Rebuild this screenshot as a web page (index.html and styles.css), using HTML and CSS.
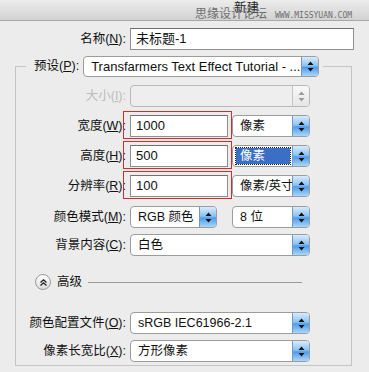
FILE: index.html
```html
<!DOCTYPE html>
<html lang="zh-CN">
<head>
  <meta charset="UTF-8" />
  <title>新建</title>
  <link rel="stylesheet" href="styles.css">
</head>
<body>
  <div class="dialog">
    <!-- Title bar -->
    <div class="titlebar">
      <span class="title">新建</span>
      <span class="watermark">思缘设计论坛</span>
      <span class="watermark-url">WWW.MISSYUAN.COM</span>
    </div>

    <div class="content">
      <!-- Name -->
      <div class="row name-row">
        <span class="label">名称(<u>N</u>):</span>
        <div class="field w-name">未标题-1</div>
      </div>

      <!-- Preset group -->
      <fieldset class="group">
        <legend>
          <span class="legend-inner">
            <span class="label">预设(<u>P</u>):</span>
            <span class="select w-preset">
              <span class="value">Transfarmers Text Effect Tutorial - ...</span>
              <span class="arrow"><svg width="7" height="11" viewBox="0 0 7 11"><path d="M3.5 0.5L6.5 4H0.5Z M3.5 10.5L6.5 7H0.5Z" fill="#111"/></svg></span>
            </span>
          </span>
        </legend>

        <div class="row size-row">
          <span class="label disabled">大小(<u>I</u>):</span>
          <span class="select disabled w-full">
            <span class="value"></span>
            <span class="arrow"><svg width="7" height="11" viewBox="0 0 7 11"><path d="M3.5 0.5L6.5 4H0.5Z M3.5 10.5L6.5 7H0.5Z" fill="#9a9a9a"/></svg></span>
          </span>
        </div>

        <div class="row">
          <span class="label">宽度(<u>W</u>):</span>
          <div class="field w-num marked">1000</div>
          <span class="select w-unit">
            <span class="value">像素</span>
            <span class="arrow"><svg width="7" height="11" viewBox="0 0 7 11"><path d="M3.5 0.5L6.5 4H0.5Z M3.5 10.5L6.5 7H0.5Z" fill="#111"/></svg></span>
          </span>
        </div>

        <div class="row">
          <span class="label">高度(<u>H</u>):</span>
          <div class="field w-num marked">500</div>
          <span class="select w-unit focused">
            <span class="value"><span class="hl">像素</span></span>
            <span class="arrow"><svg width="7" height="11" viewBox="0 0 7 11"><path d="M3.5 0.5L6.5 4H0.5Z M3.5 10.5L6.5 7H0.5Z" fill="#111"/></svg></span>
          </span>
        </div>

        <div class="row">
          <span class="label">分辨率(<u>R</u>):</span>
          <div class="field w-num marked">100</div>
          <span class="select w-unit">
            <span class="value">像素/英寸</span>
            <span class="arrow"><svg width="7" height="11" viewBox="0 0 7 11"><path d="M3.5 0.5L6.5 4H0.5Z M3.5 10.5L6.5 7H0.5Z" fill="#111"/></svg></span>
          </span>
        </div>

        <div class="row mode-row">
          <span class="label">颜色模式(<u>M</u>):</span>
          <span class="select w-mode">
            <span class="value">RGB 颜色</span>
            <span class="arrow"><svg width="7" height="11" viewBox="0 0 7 11"><path d="M3.5 0.5L6.5 4H0.5Z M3.5 10.5L6.5 7H0.5Z" fill="#111"/></svg></span>
          </span>
          <span class="select w-bits">
            <span class="value">8 位</span>
            <span class="arrow"><svg width="7" height="11" viewBox="0 0 7 11"><path d="M3.5 0.5L6.5 4H0.5Z M3.5 10.5L6.5 7H0.5Z" fill="#111"/></svg></span>
          </span>
        </div>

        <div class="row bg-row">
          <span class="label">背景内容(<u>C</u>):</span>
          <span class="select w-full">
            <span class="value">白色</span>
            <span class="arrow"><svg width="7" height="11" viewBox="0 0 7 11"><path d="M3.5 0.5L6.5 4H0.5Z M3.5 10.5L6.5 7H0.5Z" fill="#111"/></svg></span>
          </span>
        </div>

        <!-- Advanced -->
        <div class="advanced">
          <span class="toggle"><svg width="9" height="9" viewBox="0 0 9 9"><path d="M1.5 4.5L4.5 1.8L7.5 4.5 M1.5 7.5L4.5 4.8L7.5 7.5" fill="none" stroke="#222" stroke-width="1.3"/></svg></span>
          <span class="adv-text">高级</span>
          <span class="adv-line"></span>
        </div>

        <div class="row profile-row">
          <span class="label">颜色配置文件(<u>O</u>):</span>
          <span class="select w-full">
            <span class="value">sRGB IEC61966-2.1</span>
            <span class="arrow"><svg width="7" height="11" viewBox="0 0 7 11"><path d="M3.5 0.5L6.5 4H0.5Z M3.5 10.5L6.5 7H0.5Z" fill="#111"/></svg></span>
          </span>
        </div>

        <div class="row aspect-row">
          <span class="label">像素长宽比(<u>X</u>):</span>
          <span class="select w-full">
            <span class="value">方形像素</span>
            <span class="arrow"><svg width="7" height="11" viewBox="0 0 7 11"><path d="M3.5 0.5L6.5 4H0.5Z M3.5 10.5L6.5 7H0.5Z" fill="#111"/></svg></span>
          </span>
        </div>
      </fieldset>
    </div>
  </div>
</body>
</html>
```

FILE: styles.css
```css
:root {
  --bg: #ececec;
  --border: #9c9c9c;
  --group-line: #c4c4c4;
  --text: #111;
  --mark: #d22c2c;
  --font: "Liberation Sans", "Noto Sans CJK SC", sans-serif;
}

body {
  margin: 0;
  background: var(--bg);
  font-family: var(--font);
  font-size: 12.5px;
  color: var(--text);
}

/* Title bar */
.titlebar {
  position: relative;
  height: 20px;
  background: linear-gradient(#ececec, #d2d2d2);
  border-bottom: 1px solid #a8a8a8;
}
.titlebar .title {
  position: absolute;
  left: 234px;
  top: 2px;
  font-size: 12.5px;
  line-height: 13px;
  color: #222;
}
.watermark {
  position: absolute;
  left: 195px;
  top: 8px;
  font-size: 12px;
  line-height: 13px;
  color: #6e6e6e;
  white-space: nowrap;
}
.watermark-url {
  position: absolute;
  left: 275px;
  top: 11px;
  font-family: "DejaVu Sans Mono", monospace;
  font-size: 8px;
  line-height: 9px;
  color: #6e6e6e;
}

.content {
  padding-top: 7px;
}

/* Rows */
.row {
  display: flex;
  align-items: center;
  gap: 4px;
  height: 22px;
  margin-top: 8px;
}
.label {
  white-space: nowrap;
  text-align: right;
  line-height: 22px;
}
.label.disabled {
  color: #bcbcbc;
}
.group .row .label {
  width: 110px;
}
.name-row {
  margin-top: 0;
}
.name-row .label {
  width: 126px;
}

/* Text fields */
.field {
  position: relative;
  box-sizing: border-box;
  height: 22px;
  background: #fff;
  border: 1px solid #8e8e8e;
  border-top-color: #6f6f6f;
  padding-left: 5px;
  line-height: 20px;
  font-size: 13px;
}
.w-name { width: 224px; }
.w-num { width: 98px; }
.field.marked::before {
  content: "";
  position: absolute;
  left: -8px;
  right: -5px;
  top: -5px;
  bottom: -3px;
  border: 1px solid var(--mark);
}

/* Selects */
.select {
  box-sizing: border-box;
  display: flex;
  height: 22px;
  background: #fff;
  border: 1px solid var(--border);
  border-radius: 4px;
}
.select .value {
  flex: 1;
  padding-left: 7px;
  line-height: 20px;
  white-space: nowrap;
  overflow: hidden;
}
.select .arrow {
  width: 16px;
  flex: none;
  display: flex;
  align-items: center;
  justify-content: center;
  border-left: 1px solid #7897c2;
  border-radius: 0 3px 3px 0;
  background: linear-gradient(#d8ebfc, #8cc3f5 45%, #4e9cea 55%, #a9d7fb);
}
.select.disabled {
  background: #eeeeee;
  border-color: #b8b8b8;
}
.select.disabled .arrow {
  background: linear-gradient(#f8f8f8, #e6e6e6);
  border-left-color: #c4c4c4;
}
.select.focused .value {
  padding: 2px 2px 2px 3px;
}
.hl {
  display: block;
  height: 16px;
  line-height: 16px;
  padding-left: 4px;
  background: #3b6fc6;
  color: #fff;
  outline: 1px dotted #222;
}

.w-preset { width: 236px; }
.w-preset .value { font-size: 13px; }
.w-full { width: 180px; }
.w-unit { width: 78px; }
.w-mode { width: 87px; }
.w-bits { width: 78px; margin-left: 11px; }

/* Group box */
.group {
  margin: 5px 0 0 15px;
  width: 337px;
  box-sizing: border-box;
  padding: 0 0 3px 0;
  border: 1px solid var(--group-line);
  min-width: 0;
}
.group legend {
  margin-left: 10px;
  padding: 0 4px 0 8px;
}
.legend-inner {
  display: flex;
  align-items: center;
  gap: 4px;
}
.legend-inner .select {
  height: 21px;
}
.legend-inner .select .value {
  line-height: 19px;
}
.size-row { margin-top: 8px; }
.mode-row { margin-top: 9px; }
.bg-row { margin-top: 6px; }

/* Advanced */
.advanced {
  display: flex;
  align-items: center;
  height: 16px;
  margin-top: 18px;
  padding-left: 19px;
}
.toggle {
  box-sizing: border-box;
  width: 16px;
  height: 16px;
  border-radius: 50%;
  border: 1px solid #9a9a9a;
  background: linear-gradient(#ffffff, #dcdcdc);
  display: flex;
  align-items: center;
  justify-content: center;
}
.adv-text {
  margin-left: 6px;
  line-height: 16px;
}
.adv-line {
  width: 214px;
  margin-left: 6px;
  border-top: 1px solid #9a9a9a;
}
.profile-row { margin-top: 22px; }
.aspect-row { margin-top: 6px; }
```
